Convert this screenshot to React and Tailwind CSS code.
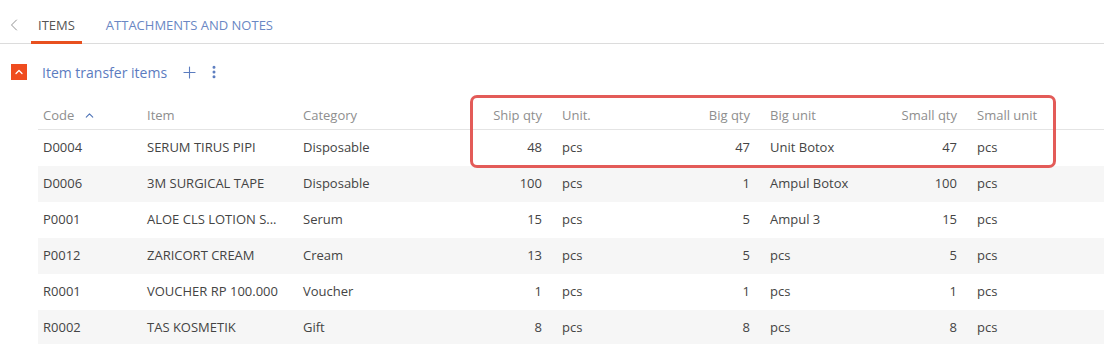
import React from 'react';
import { ChevronLeft, ChevronUp, Plus, EllipsisVertical } from 'lucide-react';

const rows = [
  { code: 'D0004', item: 'SERUM TIRUS PIPI', cat: 'Disposable', ship: 48, unit: 'pcs', big: 47, bigUnit: 'Unit Botox', small: 47, smallUnit: 'pcs' },
  { code: 'D0006', item: '3M SURGICAL TAPE', cat: 'Disposable', ship: 100, unit: 'pcs', big: 1, bigUnit: 'Ampul Botox', small: 100, smallUnit: 'pcs' },
  { code: 'P0001', item: 'ALOE CLS LOTION S...', cat: 'Serum', ship: 15, unit: 'pcs', big: 5, bigUnit: 'Ampul 3', small: 15, smallUnit: 'pcs' },
  { code: 'P0012', item: 'ZARICORT CREAM', cat: 'Cream', ship: 13, unit: 'pcs', big: 5, bigUnit: 'pcs', small: 5, smallUnit: 'pcs' },
  { code: 'R0001', item: 'VOUCHER RP 100.000', cat: 'Voucher', ship: 1, unit: 'pcs', big: 1, bigUnit: 'pcs', small: 1, smallUnit: 'pcs' },
  { code: 'R0002', item: 'TAS KOSMETIK', cat: 'Gift', ship: 8, unit: 'pcs', big: 8, bigUnit: 'pcs', small: 8, smallUnit: 'pcs' },
];

const grid = 'grid grid-cols-[104px_156px_156px_98px_108px_100px_100px_107px_1fr]';

const App = () => {
  return (
    <div className="relative w-[1104px] h-[344px] overflow-hidden bg-white text-[13px] text-[#444]" style={{ fontFamily: '"Open Sans", sans-serif' }}>
      {/* Tabs */}
      <div className="flex h-[44px] border-b border-[#dcdcdc]">
        <div className="w-[31px] flex items-start pt-[15px] pl-[4px] text-[#888]">
          <ChevronLeft size={20} strokeWidth={1.1} />
        </div>
        <div className="relative px-[7px] pt-[16px] text-[#555] uppercase">
          Items
          <div className="absolute left-0 right-0 bottom-[-1px] h-[3px] bg-[#e8501f]" />
        </div>
        <div className="ml-[24px] pt-[16px] text-[#6a87c4] uppercase">Attachments and notes</div>
      </div>

      {/* Group header */}
      <div className="flex items-center h-[56px] pl-[11px]">
        <div className="w-[16px] h-[16px] bg-[#ef4c1f] flex items-center justify-center text-white">
          <ChevronUp size={12} strokeWidth={2.5} />
        </div>
        <div className="ml-[15px] text-[14px] text-[#5b7cbf]">Item transfer items</div>
        <Plus size={19} strokeWidth={1.4} className="ml-[13px] text-[#5b7cbf]" />
        <EllipsisVertical size={16} strokeWidth={2.5} className="ml-[7px] text-[#5b7cbf]" />
      </div>

      {/* Table */}
      <div className="ml-[38px] mt-[2px]">
        <div className={`${grid} h-[28px] items-center border-b border-[#e4e4e4] text-[#8e8e8e]`}>
          <div className="pl-[5px] flex items-center">
            Code
            <ChevronUp size={13} strokeWidth={2} className="ml-[9px] text-[#4f74b8]" />
          </div>
          <div className="pl-[5px]">Item</div>
          <div className="pl-[5px]">Category</div>
          <div className="pr-[10px] text-right">Ship qty</div>
          <div className="pl-[10px]">Unit.</div>
          <div className="pr-[10px] text-right">Big qty</div>
          <div className="pl-[10px]">Big unit</div>
          <div className="pr-[10px] text-right">Small qty</div>
          <div className="pl-[10px]">Small unit</div>
        </div>
        {rows.map((r, i) => (
          <div key={r.code} className={`${grid} h-[36px] items-center ${i % 2 === 1 ? 'bg-[#f6f6f6]' : 'bg-white'}`}>
            <div className="pl-[5px]">{r.code}</div>
            <div className="pl-[5px]">{r.item}</div>
            <div className="pl-[5px]">{r.cat}</div>
            <div className="pr-[10px] text-right">{r.ship}</div>
            <div className="pl-[10px]">{r.unit}</div>
            <div className="pr-[10px] text-right">{r.big}</div>
            <div className="pl-[10px]">{r.bigUnit}</div>
            <div className="pr-[10px] text-right">{r.small}</div>
            <div className="pl-[10px]">{r.smallUnit}</div>
          </div>
        ))}
      </div>

      {/* Highlight annotation */}
      <div className="absolute left-[470px] top-[95px] w-[586px] h-[73px] border-[3px] border-[#e35b58] rounded-[7px] pointer-events-none" />
    </div>
  );
};

export default App;
